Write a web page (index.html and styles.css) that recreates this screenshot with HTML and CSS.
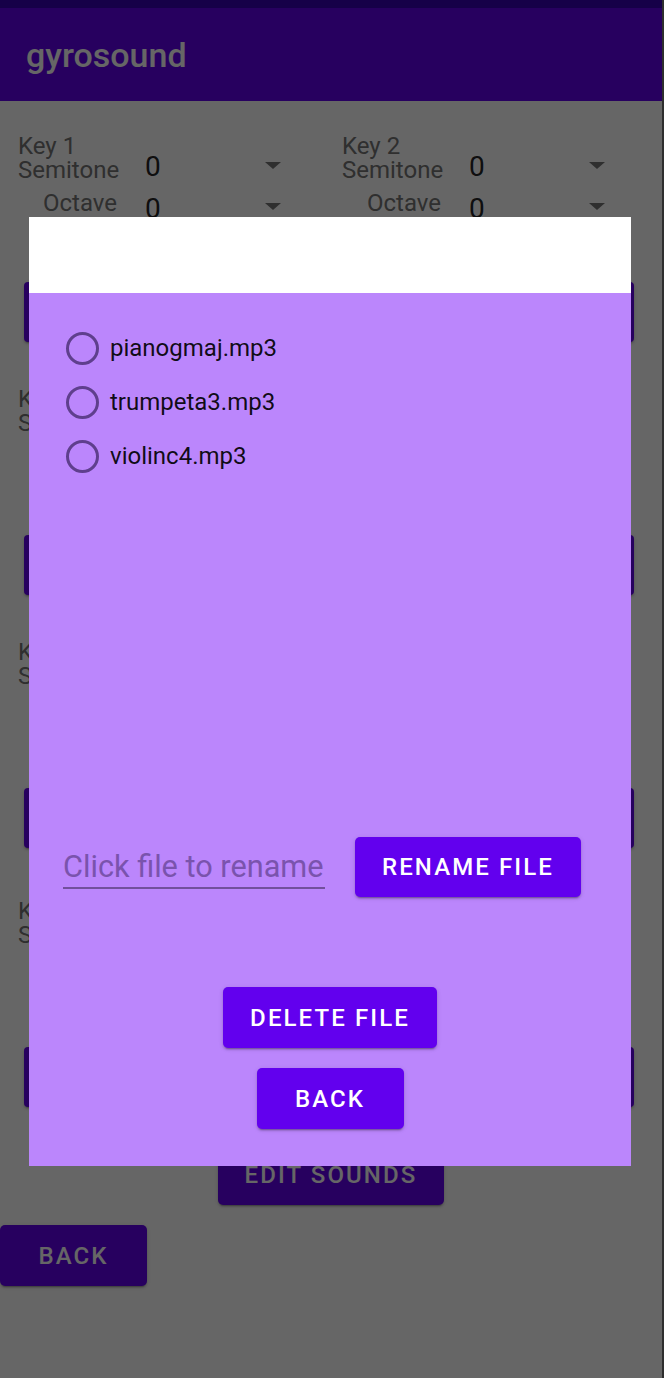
FILE: index.html
```html
<!DOCTYPE html>
<html lang="en">
<head>
<meta charset="utf-8">
<title>gyrosound</title>
<link rel="stylesheet" href="styles.css">
</head>
<body>
<div class="phone">
  <div class="statusbar"></div>
  <header class="appbar"><h1 class="title">gyrosound</h1></header>
  <main class="content">
    <section class="section s1">
      <div class="keys">
        <div class="key">
          <div class="key-title">Key 1</div>
          <div class="row"><span class="label">Semitone</span><span class="value">0</span><span class="arrow"></span></div>
          <div class="row octave"><span class="label">Octave</span><span class="value">0</span><span class="arrow"></span></div>
        </div>
        <div class="key">
          <div class="key-title">Key 2</div>
          <div class="row"><span class="label">Semitone</span><span class="value">0</span><span class="arrow"></span></div>
          <div class="row octave"><span class="label">Octave</span><span class="value">0</span><span class="arrow"></span></div>
        </div>
      </div>
      <button class="wide-btn"></button>
    </section>
    <section class="section">
      <div class="keys">
        <div class="key">
          <div class="key-title">Key 3</div>
          <div class="row"><span class="label">Semitone</span><span class="value">0</span><span class="arrow"></span></div>
          <div class="row octave"><span class="label">Octave</span><span class="value">0</span><span class="arrow"></span></div>
        </div>
        <div class="key">
          <div class="key-title">Key 4</div>
          <div class="row"><span class="label">Semitone</span><span class="value">0</span><span class="arrow"></span></div>
          <div class="row octave"><span class="label">Octave</span><span class="value">0</span><span class="arrow"></span></div>
        </div>
      </div>
      <button class="wide-btn"></button>
    </section>
    <section class="section">
      <div class="keys">
        <div class="key">
          <div class="key-title">Key 5</div>
          <div class="row"><span class="label">Semitone</span><span class="value">0</span><span class="arrow"></span></div>
          <div class="row octave"><span class="label">Octave</span><span class="value">0</span><span class="arrow"></span></div>
        </div>
        <div class="key">
          <div class="key-title">Key 6</div>
          <div class="row"><span class="label">Semitone</span><span class="value">0</span><span class="arrow"></span></div>
          <div class="row octave"><span class="label">Octave</span><span class="value">0</span><span class="arrow"></span></div>
        </div>
      </div>
      <button class="wide-btn"></button>
    </section>
    <section class="section s4">
      <div class="keys">
        <div class="key">
          <div class="key-title">Key 7</div>
          <div class="row"><span class="label">Semitone</span><span class="value">0</span><span class="arrow"></span></div>
          <div class="row octave"><span class="label">Octave</span><span class="value">0</span><span class="arrow"></span></div>
        </div>
        <div class="key">
          <div class="key-title">Key 8</div>
          <div class="row"><span class="label">Semitone</span><span class="value">0</span><span class="arrow"></span></div>
          <div class="row octave"><span class="label">Octave</span><span class="value">0</span><span class="arrow"></span></div>
        </div>
      </div>
      <button class="wide-btn"></button>
    </section>
    <div class="edit-wrap"><button class="btn">EDIT SOUNDS</button></div>
    <button class="btn back-main">BACK</button>
  </main>

  <div class="scrim"></div>

  <div class="dialog">
    <div class="dialog-head"></div>
    <div class="dialog-body">
      <ul class="radios">
        <li class="radio"><span class="circle"></span><span class="radio-text">pianogmaj.mp3</span></li>
        <li class="radio"><span class="circle"></span><span class="radio-text">trumpeta3.mp3</span></li>
        <li class="radio"><span class="circle"></span><span class="radio-text">violinc4.mp3</span></li>
      </ul>
      <div class="rename-row">
        <input class="rename-input" type="text" placeholder="Click file to rename">
        <button class="btn dlg-btn">RENAME FILE</button>
      </div>
      <div class="actions">
        <button class="btn dlg-btn">DELETE FILE</button>
        <button class="btn dlg-btn back-dlg">BACK</button>
      </div>
    </div>
  </div>
</div>
</body>
</html>
```

FILE: styles.css
```css
* { box-sizing: border-box; }

html, body {
  margin: 0;
  padding: 0;
}

body {
  width: 664px;
  height: 1378px;
  overflow: hidden;
  background: #2e2e2e;
  font-family: Roboto, "Liberation Sans", sans-serif;
}

.phone {
  position: relative;
  width: 662px;
  height: 1378px;
  background: #ffffff;
  overflow: hidden;
}

.statusbar {
  height: 8px;
  background: #3700b3;
}

.appbar {
  height: 93px;
  background: #6200ee;
  display: flex;
  align-items: center;
  padding-left: 26px;
}

.title {
  margin: 0;
  color: #ffffff;
  font-size: 34px;
  font-weight: 500;
  line-height: 40px;
  padding-top: 0;
}

.content {
  display: flex;
  flex-direction: column;
}

.section {
  padding-top: 45px;
  display: flex;
  flex-direction: column;
}
.section.s1 { padding-top: 33px; }
.section.s4 { padding-top: 51px; }

.keys {
  display: grid;
  grid-template-columns: 324px 324px;
  padding-left: 18px;
  height: 87px;
}

.key-title {
  font-size: 24px;
  line-height: 24px;
  color: #757575;
}

.row {
  display: flex;
  align-items: flex-start;
  height: 24px;
}
.row.octave {
  margin-top: 9px;
  height: 30px;
}

.label {
  width: 127px;
  padding-right: 26px;
  text-align: right;
  font-size: 24px;
  line-height: 24px;
  color: #757575;
}
.octave .label { padding-right: 28px; }

.value {
  width: 120px;
  font-size: 28px;
  line-height: 24px;
  color: rgba(0, 0, 0, 0.87);
  margin-top: -3px;
}
.octave .value { margin-top: 6px; }

.arrow {
  width: 0;
  height: 0;
  border-left: 8.5px solid transparent;
  border-right: 8.5px solid transparent;
  border-top: 7px solid #757575;
  margin-top: 4px;
}
.octave .arrow { margin-top: 12px; }

.wide-btn {
  margin: 61px 0 0 24px;
  width: 610px;
  height: 60px;
  border: none;
  border-radius: 4px;
  background: #6200ee;
  box-shadow: 0 3px 1px -2px rgba(0,0,0,.2), 0 2px 2px 0 rgba(0,0,0,.14), 0 1px 5px 0 rgba(0,0,0,.12);
}

.btn {
  height: 61px;
  min-width: 147px;
  padding: 0 27px;
  border: none;
  border-radius: 5px;
  background: #6200ee;
  color: #ffffff;
  font-family: inherit;
  font-size: 24px;
  font-weight: 500;
  letter-spacing: 2.1px;
  box-shadow: 0 3px 1px -2px rgba(0,0,0,.2), 0 2px 2px 0 rgba(0,0,0,.14), 0 1px 5px 0 rgba(0,0,0,.12);
}

.edit-wrap {
  display: flex;
  justify-content: center;
  margin-top: 37px;
}

.back-main {
  align-self: flex-start;
  margin-top: 20px;
}

.scrim {
  position: absolute;
  inset: 0;
  background: rgba(0, 0, 0, 0.6);
}

.dialog {
  position: absolute;
  left: 29px;
  top: 217px;
  width: 602px;
  height: 949px;
  display: flex;
  flex-direction: column;
}

.dialog-head {
  height: 76px;
  background: #ffffff;
}

.dialog-body {
  flex: 1;
  background: #bb86fc;
  display: flex;
  flex-direction: column;
}

.radios {
  list-style: none;
  margin: 28px 0 0 0;
  padding: 0 0 0 37px;
}

.radio {
  height: 54px;
  display: flex;
  align-items: center;
}

.circle {
  width: 33px;
  height: 33px;
  border: 3px solid #5f3f8d;
  border-radius: 50%;
}

.radio-text {
  margin-left: 11px;
  font-size: 24px;
  color: rgba(0, 0, 0, 0.92);
}

.rename-row {
  display: flex;
  align-items: flex-start;
  margin-top: 354px;
  padding-left: 34px;
  gap: 30px;
}

.rename-input {
  width: 262px;
  height: 52px;
  padding: 8px 0 0 0;
  border: none;
  border-bottom: 2px solid #72509c;
  background: transparent;
  font-family: inherit;
  font-size: 30.7px;
  color: #000;
  outline: none;
}
.rename-input::placeholder {
  color: #7a53ad;
  opacity: 1;
}

.rename-row .dlg-btn { height: 60px; }

.actions {
  display: flex;
  flex-direction: column;
  align-items: center;
  margin-top: 90px;
  gap: 20px;
}
```
